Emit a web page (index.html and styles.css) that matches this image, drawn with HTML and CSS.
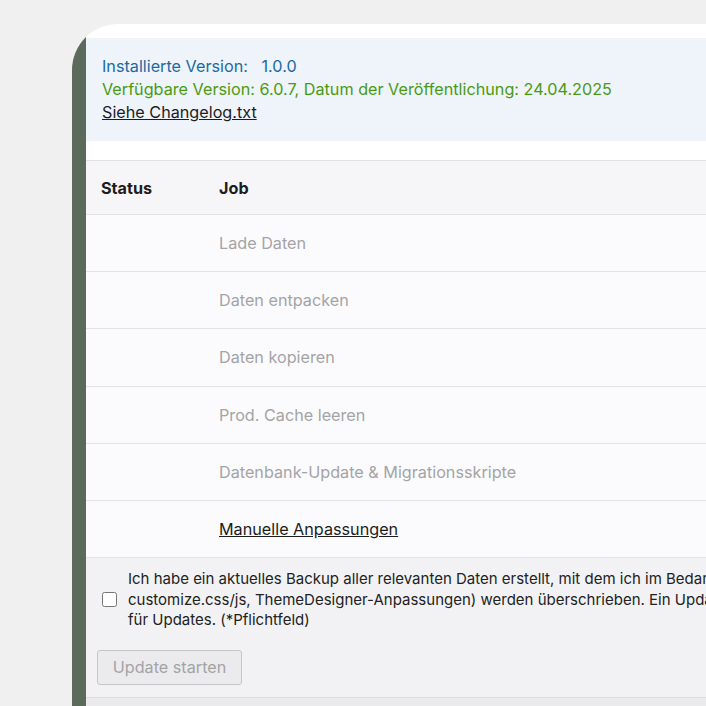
FILE: index.html
```html
<!DOCTYPE html>
<html lang="de">
<head>
    <meta charset="UTF-8">
    <meta name="viewport" content="width=device-width, initial-scale=1.0">
    <title>Update</title>
    <link rel="stylesheet" href="styles.css">
</head>
<body>
    <div class="frame">
        <div class="sidebar"></div>
        <div class="content">
            <div class="info">
                <div class="installed">Installierte Version:&nbsp;&nbsp; 1.0.0</div>
                <div class="available">Verfügbare Version: 6.0.7, Datum der Veröffentlichung: 24.04.2025</div>
                <a class="changelog" href="#">Siehe Changelog.txt</a>
            </div>
            <table class="jobs">
                <colgroup>
                    <col class="status">
                    <col>
                </colgroup>
                <thead>
                    <tr>
                        <th>Status</th>
                        <th>Job</th>
                    </tr>
                </thead>
                <tbody>
                    <tr><td></td><td class="pending">Lade Daten</td></tr>
                    <tr><td></td><td class="pending">Daten entpacken</td></tr>
                    <tr><td></td><td class="pending">Daten kopieren</td></tr>
                    <tr><td></td><td class="pending">Prod. Cache leeren</td></tr>
                    <tr><td></td><td class="pending">Datenbank-Update &amp; Migrationsskripte</td></tr>
                    <tr><td></td><td><a href="#">Manuelle Anpassungen</a></td></tr>
                </tbody>
            </table>
            <div class="confirm">
                <label class="backup">
                    <input type="checkbox">
                    <span>Ich habe ein aktuelles Backup aller relevanten Daten erstellt, mit dem ich im Bedarfsfall alles wiederherstellen kann. Eigene Anpassungen (z.B.<br>
                    customize.css/js, ThemeDesigner-Anpassungen) werden überschrieben. Ein Update erfolgt auf eigene Gefahr, es gelten die Bedingungen<br>
                    für Updates. (*Pflichtfeld)</span>
                </label>
                <button class="start" disabled>Update starten</button>
            </div>
            <div class="footer"></div>
        </div>
    </div>
</body>
</html>
```

FILE: styles.css
```css
body{
    margin: 0;
    height: 706px;
    overflow: hidden;
    background: #f0f0f0;
    font-family: Inter, "Liberation Sans", sans-serif;
    color: #1d1d1f;
}
.frame{
    margin: 24px 0 0 72px;
    width: 1100px;
    height: 720px;
    display: flex;
    border-top-left-radius: 46px;
    overflow: hidden;
}
.sidebar{
    width: 14px;
    background: #5b6a5b;
}
.content{
    flex: 1;
    background: #fff;
    padding-top: 14px;
}
.info{
    background: #eef4fa;
    padding: 17px 16px;
    font-size: 16.2px;
    line-height: 23px;
}
.info .installed{
    color: #1b6aa0;
}
.info .available{
    color: #4b9a12;
}
.info .changelog{
    color: #1d1d1f;
}
.jobs{
    margin-top: 19px;
    width: 100%;
    table-layout: fixed;
    border-collapse: collapse;
    font-size: 16.2px;
}
.jobs col.status{
    width: 118px;
}
.jobs th{
    text-align: left;
    font-weight: 700;
    height: 53px;
    padding: 0 15px;
    background: #f6f6f8;
    border-top: 1px solid #e3e3e5;
    border-bottom: 1px solid #e3e3e5;
}
.jobs td{
    height: 56.2px;
    padding: 0 15px;
    background: #fbfbfd;
    border-bottom: 1px solid #e3e3e5;
    white-space: nowrap;
}
.jobs .pending{
    color: #a4a4a6;
}
.jobs a{
    color: #1d1d1f;
}
.confirm{
    background: #f2f2f4;
    padding: 11px 11px 12px;
    border-bottom: 1px solid #dcdcde;
}
.backup{
    display: flex;
    align-items: center;
    font-size: 15px;
    line-height: 20.5px;
    color: #222;
}
.backup input{
    width: 15px;
    height: 15px;
    margin: 0 11px 0 5px;
    flex: none;
}
.backup span{
    white-space: nowrap;
}
.start{
    margin-top: 19px;
    height: 35px;
    width: 145px;
    font-family: inherit;
    font-size: 16.2px;
    color: #a3a3a5;
    background: #ebebed;
    border: 1px solid #c6c6c8;
    border-radius: 3px;
}
.footer{
    height: 20px;
    background: #ebebed;
}
```
